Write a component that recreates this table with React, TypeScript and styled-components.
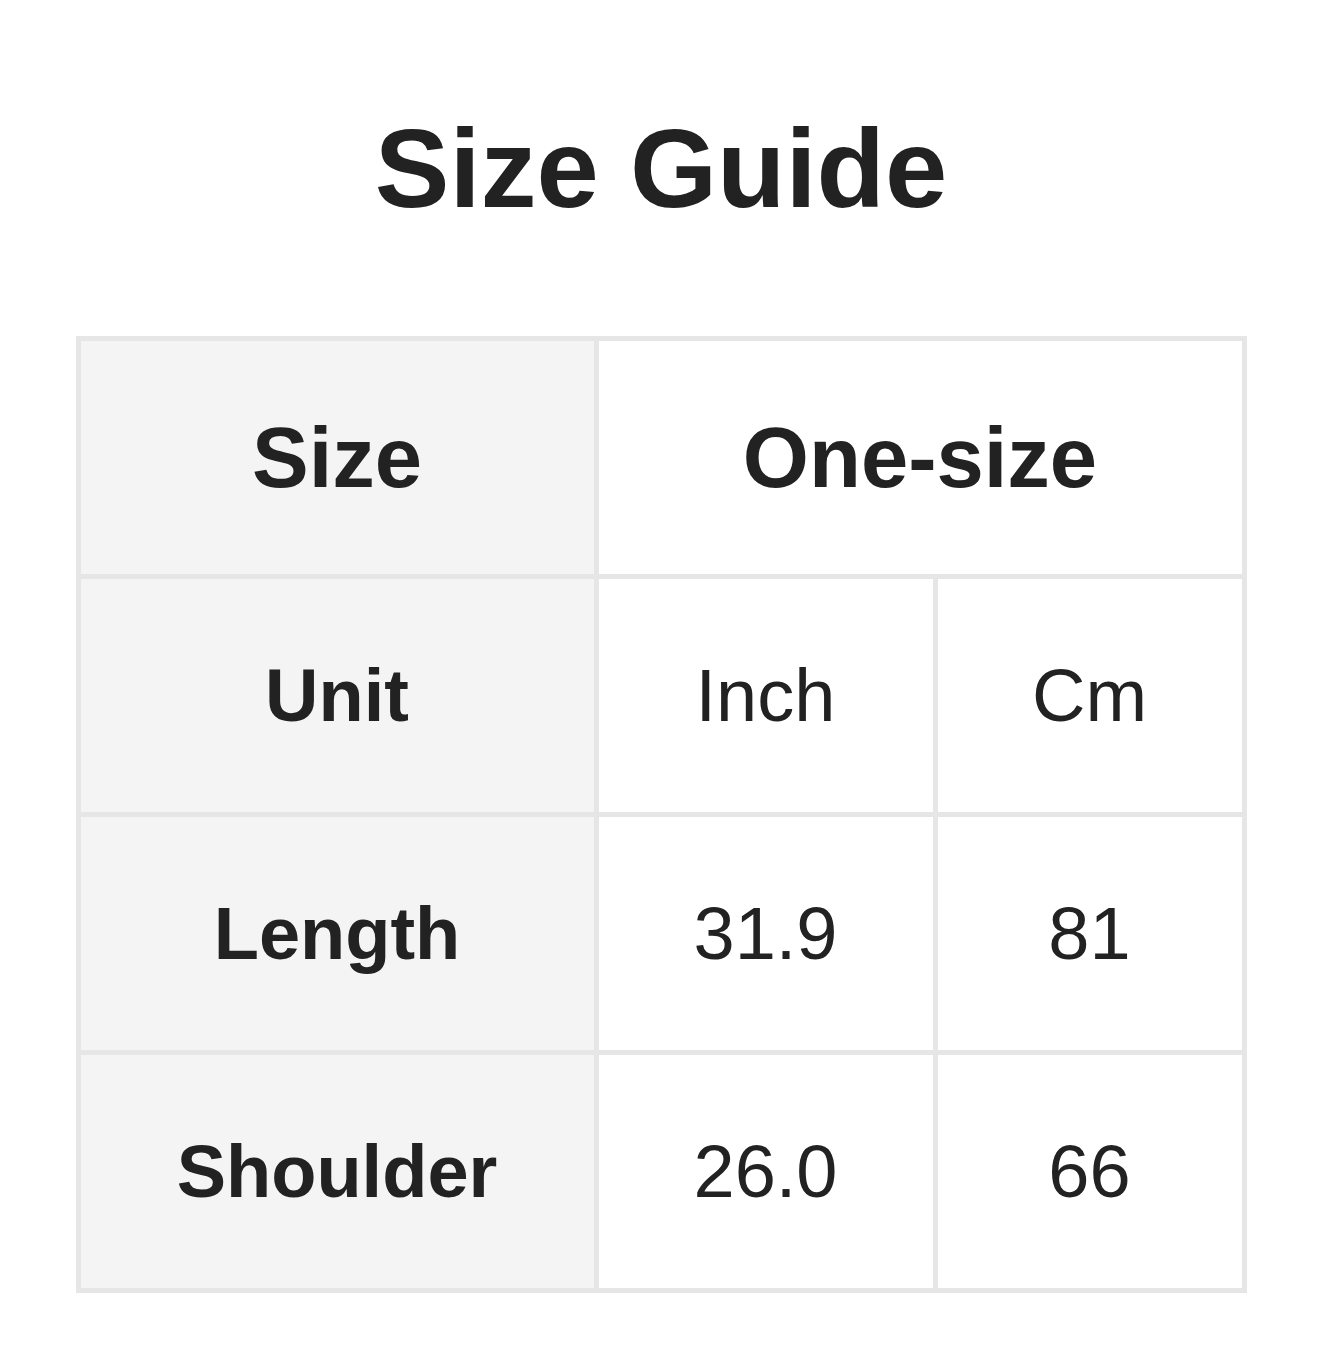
import React from 'react';
import styled, { createGlobalStyle } from 'styled-components';

const GlobalStyle = createGlobalStyle`
  body {
    margin: 0;
    background: #ffffff;
    font-family: "Liberation Sans", Arial, sans-serif;
    color: #222222;
  }
`;

const rows = [
  { label: 'Length', inch: '31.9', cm: '81' },
  { label: 'Shoulder', inch: '26.0', cm: '66' },
];

const App: React.FC = () => {
  return (
    <>
      <GlobalStyle />
      <Page>
        <Title>Size Guide</Title>
        <Grid>
          <Cell $label $head>Size</Cell>
          <Cell $head $span={2}>One-size</Cell>
          <Cell $label>Unit</Cell>
          <Cell>Inch</Cell>
          <Cell>Cm</Cell>
          {rows.map((row) => (
            <React.Fragment key={row.label}>
              <Cell $label>{row.label}</Cell>
              <Cell>{row.inch}</Cell>
              <Cell>{row.cm}</Cell>
            </React.Fragment>
          ))}
        </Grid>
      </Page>
    </>
  );
};

export default App;

const Page = styled.div`
  width: 1322px;
  padding-top: 113px;
  display: flex;
  flex-direction: column;
  align-items: center;
`;

const Title = styled.h1`
  margin: 0 0 111px;
  font-size: 112px;
  line-height: 112px;
  font-weight: 700;
  color: #222222;
`;

const Grid = styled.div`
  display: grid;
  grid-template-columns: 513px 334px 304px;
  grid-auto-rows: 233px;
  gap: 5px;
  padding: 5px;
  background: #e6e6e6;
`;

const Cell = styled.div<{ $label?: boolean; $head?: boolean; $span?: number }>`
  display: flex;
  align-items: center;
  justify-content: center;
  grid-column: span ${(p) => p.$span ?? 1};
  background: ${(p) => (p.$label ? '#f4f4f4' : '#ffffff')};
  font-size: ${(p) => (p.$head ? '85px' : '74px')};
  font-weight: ${(p) => (p.$label || p.$head ? 700 : 400)};
  color: #222222;
`;
